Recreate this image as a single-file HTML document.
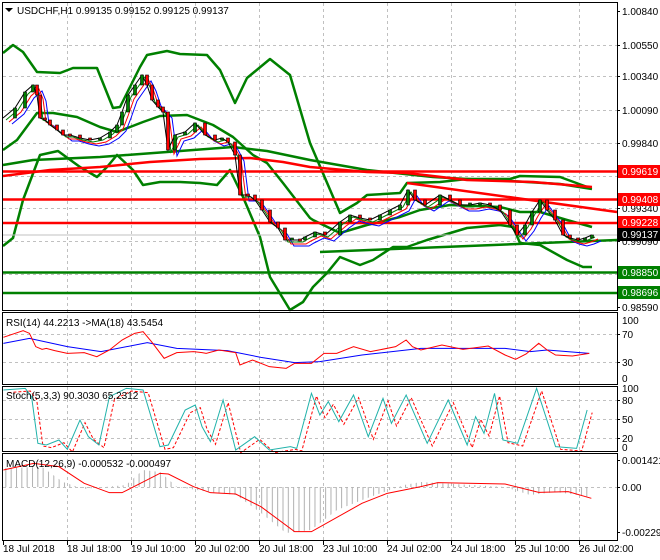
<!DOCTYPE html>
<html><head><meta charset="utf-8"><style>
html,body{margin:0;padding:0;background:#fff;}
svg{display:block;font-family:"Liberation Sans",Tahoma,sans-serif;font-size:10px;}
</style></head><body>
<svg width="660" height="560" viewBox="0 0 660 560" xmlns="http://www.w3.org/2000/svg">
<defs>
<pattern id="hp" patternUnits="userSpaceOnUse" width="5.33" height="10"><rect x="0" y="0" width="1" height="10" fill="#b0b0b0"/></pattern>
<polyline id="cl" fill="none" points="3,118 15,108 25,92 33,85 37,95 40,118 45,120 50,125 57,130 63,135 70,135 80,138 90,140 100,138 110,132 117,125 122,112 128,95 135,85 142,75 147,85 152,100 158,107 163,112 168,150 175,135 185,132 195,123 205,135 215,140 222,138 228,142 235,155 240,195 248,195 255,200 262,210 270,222 278,228 285,240 292,240 300,240 305,237 315,232 325,235 340,222 350,215 360,218 370,220 380,215 390,210 400,205 408,190 415,200 425,205 440,195 450,200 460,205 470,205 480,203 490,205 500,210 510,225 517,235 525,225 532,212 540,200 547,210 555,220 563,235 570,238 578,240 585,238 592,235"/>
<polyline id="st" fill="none" vector-effect="non-scaling-stroke" points="8,270 60,265 75,290 90,430 110,435 140,420 160,448 190,360 210,410 235,435 260,290 300,265 340,270 380,440 400,435 440,330 464,315 480,380 500,425 530,300 560,450 605,410 640,450 690,440 705,445 740,280 760,345 780,305 805,365 840,285 875,410 910,295 930,370 965,285 1015,430 1065,300 1110,435 1130,350 1150,400 1175,280 1195,420 1230,430 1275,265 1320,440 1370,445 1395,330"/>
</defs>
<rect width="660" height="560" fill="#fff"/>
<g stroke="#c0c0c0" stroke-dasharray="3,3" stroke-width="1">
<path d="M67.5,3V541M131.5,3V541M195.5,3V541M259.5,3V541M323.5,3V541M387.5,3V541M451.5,3V541M515.5,3V541M579.5,3V541"/>
<path d="M3,45.5H617M3,76.5H617M3,110.5H617M3,143.5H617M3,176.5H617M3,208.5H617M3,241.5H617M3,274.5H617M3,334.5H617M3,362.5H617M3,400.5H617M3,419.5H617M3,438.5H617M3,487.5H617"/>
</g>
<g fill="none" stroke-linejoin="round">
<polyline stroke="#008000" stroke-width="2.5" points="3,53 13,45 23,52 37,72 60,73 73,68 97,68 113,108 120,107 140,67 147,55 167,51 180,54 207,55 220,70 235,103 247,78 270,59 290,75 310,143 340,213 357,203 367,195 400,193 407,183 440,182 467,179 510,179 520,176 560,177 590,188"/>
<polyline stroke="#008000" stroke-width="2.5" points="3,246 13,238 23,200 40,155 58,151 80,167 97,177 107,167 117,155 133,170 143,185 160,182 180,182 200,183 217,185 230,170 243,197 260,237 270,277 290,310 303,302 313,287 327,273 340,257 360,265 373,260 393,247 407,247 427,240 467,228 500,225 513,227 520,243 540,245 567,260 583,267 592,267"/>
<polyline stroke="#008000" stroke-width="2.5" points="3,150 17,140 37,113 53,113 77,117 100,127 117,132 143,122 160,116 187,115 213,125 233,137 253,155 267,163 283,183 310,218 313,220 340,233 367,225 400,217 420,210 450,205 500,207 520,212 540,212 567,220 592,227"/>
<polyline stroke="#008000" stroke-width="2.5" points="3,165 33,160 100,157 167,152 233,147 267,151 310,160 367,170 433,177 467,179 510,181 560,184 592,189"/>
<polyline stroke="#ff0000" stroke-width="2.5" points="3,176 50,170 100,167 150,162 200,159 250,158 283,162 310,167 367,172 407,173 467,180 533,182 592,187"/>
<line x1="407" y1="183" x2="617" y2="212" stroke="#ff0000" stroke-width="2.5"/>
<line x1="320" y1="252" x2="617" y2="240" stroke="#008000" stroke-width="2.5"/>
<line x1="2" y1="171.5" x2="617" y2="171.5" stroke="#ff0000" stroke-width="2.5"/>
<line x1="2" y1="199.5" x2="617" y2="199.5" stroke="#ff0000" stroke-width="2.5"/>
<line x1="2" y1="223" x2="617" y2="223" stroke="#ff0000" stroke-width="2.5"/>
<line x1="2" y1="235" x2="617" y2="235" stroke="#c0c0c0" stroke-width="1"/>
<line x1="2" y1="272.5" x2="617" y2="272.5" stroke="#008000" stroke-width="2.5"/>
<line x1="2" y1="293" x2="617" y2="293" stroke="#008000" stroke-width="2.5"/>
</g>
<!-- thin MAs -->
<use href="#cl" stroke="#0000ff" stroke-width="1" transform="translate(9,6)"/>
<use href="#cl" stroke="#ff0000" stroke-width="1" transform="translate(6,4)"/>
<use href="#cl" stroke="#008000" stroke-width="1" transform="translate(3,2)"/>
<!-- wicks -->
<use href="#cl" stroke="#000" stroke-width="1"/>
<g stroke="#000" stroke-width="0.6">
<g fill="#008000">
<rect x="13.5" y="108" width="3" height="10"/><rect x="23.5" y="92" width="3" height="16"/><rect x="31.5" y="85" width="3" height="7"/>
<rect x="98.5" y="138" width="3" height="2"/><rect x="108.5" y="132" width="3" height="6"/><rect x="115.5" y="125" width="3" height="7"/><rect x="120.5" y="112" width="3" height="13"/><rect x="126.5" y="95" width="3" height="17"/><rect x="133.5" y="85" width="3" height="10"/><rect x="140.5" y="75" width="3" height="10"/>
<rect x="173.5" y="135" width="3" height="15"/><rect x="183.5" y="132" width="3" height="3"/><rect x="193.5" y="123" width="3" height="9"/><rect x="220.5" y="138" width="3" height="2"/>
<rect x="290.5" y="238" width="3" height="2"/><rect x="303.5" y="237" width="3" height="3"/><rect x="313.5" y="232" width="3" height="5"/><rect x="338.5" y="222" width="3" height="13"/><rect x="348.5" y="215" width="3" height="7"/>
<rect x="378.5" y="215" width="3" height="5"/><rect x="388.5" y="210" width="3" height="5"/><rect x="398.5" y="205" width="3" height="5"/><rect x="406.5" y="190" width="3" height="15"/><rect x="438.5" y="195" width="3" height="10"/>
<rect x="468.5" y="203" width="3" height="2"/><rect x="478.5" y="203" width="3" height="2"/><rect x="523.5" y="225" width="3" height="10"/><rect x="530.5" y="212" width="3" height="13"/><rect x="538.5" y="200" width="3" height="12"/>
<rect x="583.5" y="238" width="3" height="2"/><rect x="590.5" y="235" width="3" height="3"/>
</g>
<g fill="#ff0000">
<rect x="35.5" y="85" width="3" height="10"/><rect x="38.5" y="95" width="3" height="23"/><rect x="43.5" y="118" width="3" height="2"/><rect x="48.5" y="120" width="3" height="5"/><rect x="55.5" y="125" width="3" height="5"/><rect x="61.5" y="130" width="3" height="5"/><rect x="68.5" y="134" width="3" height="2"/><rect x="78.5" y="135" width="3" height="3"/><rect x="88.5" y="138" width="3" height="2"/>
<rect x="145.5" y="75" width="3" height="10"/><rect x="150.5" y="85" width="3" height="15"/><rect x="156.5" y="100" width="3" height="7"/><rect x="161.5" y="107" width="3" height="5"/><rect x="166.5" y="112" width="3" height="38"/>
<rect x="203.5" y="123" width="3" height="12"/><rect x="213.5" y="135" width="3" height="5"/><rect x="226.5" y="138" width="3" height="4"/><rect x="233.5" y="142" width="3" height="13"/><rect x="238.5" y="155" width="3" height="40"/><rect x="246.5" y="194" width="3" height="2"/><rect x="253.5" y="195" width="3" height="5"/><rect x="260.5" y="200" width="3" height="10"/><rect x="268.5" y="210" width="3" height="12"/><rect x="276.5" y="222" width="3" height="6"/><rect x="283.5" y="228" width="3" height="12"/><rect x="298.5" y="239" width="3" height="2"/>
<rect x="323.5" y="232" width="3" height="3"/><rect x="358.5" y="215" width="3" height="3"/><rect x="368.5" y="218" width="3" height="2"/><rect x="413.5" y="190" width="3" height="10"/><rect x="423.5" y="200" width="3" height="5"/><rect x="448.5" y="195" width="3" height="5"/><rect x="458.5" y="200" width="3" height="5"/><rect x="488.5" y="203" width="3" height="2"/><rect x="498.5" y="205" width="3" height="5"/><rect x="508.5" y="210" width="3" height="15"/><rect x="515.5" y="225" width="3" height="10"/>
<rect x="545.5" y="200" width="3" height="10"/><rect x="553.5" y="210" width="3" height="10"/><rect x="561.5" y="220" width="3" height="15"/><rect x="568.5" y="235" width="3" height="3"/><rect x="576.5" y="238" width="3" height="2"/>
</g>
</g>
<!-- indicators in zoom coords -->
<g transform="translate(0,300) scale(0.42088,0.33333)" fill="none">
<polyline vector-effect="non-scaling-stroke" stroke="#0000ff" points="8,130 70,115 160,140 240,155 350,128 420,145 540,152 620,172 700,188 760,185 860,165 1000,145 1200,145 1260,155 1300,150 1400,160"/>
<polyline vector-effect="non-scaling-stroke" stroke="#ff0000" points="8,112 55,92 70,100 85,140 100,148 110,145 130,152 160,160 200,158 230,170 260,150 290,120 320,100 340,95 360,125 390,175 420,158 460,155 480,158 490,160 520,150 560,158 570,195 600,180 640,200 680,205 700,190 740,190 770,160 800,160 840,140 880,155 900,150 940,140 965,120 980,140 1000,150 1050,135 1100,148 1160,138 1200,165 1225,178 1250,162 1280,130 1300,150 1320,165 1360,168 1400,160"/>
<use href="#st" stroke="#ff0000" stroke-dasharray="3,2" transform="translate(12,8)"/>
<use href="#st" stroke="#20b2aa"/>
</g>
<polygon fill="url(#hp)" points="3,487 3,468 42,467 63,482 84,489 126,485 143,470 160,472 177,487 210,492 236,495 261,513 286,533 311,530 337,510 370,497 404,485 421,482 505,487 530,495 556,492 591,497 591,487"/>
<g transform="translate(0,300) scale(0.42088,0.33333)" fill="none">
<polyline vector-effect="non-scaling-stroke" stroke="#ff0000" points="8,510 80,490 140,500 200,550 260,578 290,578 380,520 400,522 460,560 500,578 560,582 620,620 700,695 740,695 860,610 920,580 1000,560 1040,548 1200,552 1280,577 1350,575 1405,595"/>
</g>
<g fill="none" stroke="#000" stroke-width="1">
<rect x="2.5" y="2.5" width="615" height="308"/>
<rect x="2.5" y="312.5" width="615" height="72"/>
<rect x="2.5" y="386.5" width="615" height="65"/>
<rect x="2.5" y="453.5" width="615" height="87"/>
<path d="M3.5,541V545M67.5,541V545M131.5,541V545M195.5,541V545M259.5,541V545M323.5,541V545M387.5,541V545M451.5,541V545M515.5,541V545M579.5,541V545"/>
<path d="M617,11.5h3M617,45.5h3M617,76.5h3M617,110.5h3M617,143.5h3M617,208.5h3M617,241.5h3M617,307.5h3M617,334.5h3M617,362.5h3M617,400.5h3M617,419.5h3M617,438.5h3M617,460.5h3M617,487.5h3M617,532.5h3"/>
</g>
<polygon points="5,8 13,8 9,12" fill="#000"/>
<text x="17" y="14" fill="#000">USDCHF,H1  0.99135 0.99152 0.99125 0.99137</text>
<text x="6" y="326" fill="#000">RSI(14) 44.2213  -&gt;MA(18) 43.5454</text>
<text x="6" y="399" fill="#000">Stoch(5,3,3) 90.3030 65.2312</text>
<text x="6" y="467" fill="#000">MACD(12,26,9) -0.000532 -0.000497</text>
<g fill="#000">
<text x="622" y="15">1.00840</text><text x="622" y="49">1.00550</text><text x="622" y="80">1.00340</text><text x="622" y="114">1.00090</text><text x="622" y="147">0.99840</text><text x="622" y="212">0.99340</text><text x="622" y="245">0.99090</text><text x="622" y="311">0.98590</text>
<text x="622" y="324">100</text><text x="622" y="338">70</text><text x="622" y="366">30</text><text x="622" y="382">0</text>
<text x="622" y="392">100</text><text x="622" y="404">80</text><text x="622" y="423">50</text><text x="622" y="442">20</text><text x="622" y="451">0</text>
<text x="622" y="464">0.001421</text><text x="622" y="491">0.00</text><text x="622" y="536">-0.002298</text>
<text x="3" y="552">18 Jul 2018</text><text x="67" y="552">18 Jul 18:00</text><text x="131" y="552">19 Jul 10:00</text><text x="195" y="552">20 Jul 02:00</text><text x="259" y="552">20 Jul 18:00</text><text x="323" y="552">23 Jul 10:00</text><text x="387" y="552">24 Jul 02:00</text><text x="451" y="552">24 Jul 18:00</text><text x="515" y="552">25 Jul 10:00</text><text x="579" y="552">26 Jul 02:00</text>
</g>
<g fill="#fff">
<rect x="618" y="165" width="42" height="13" fill="#ff0000"/><text x="622" y="175">0.99619</text>
<rect x="618" y="193" width="42" height="13" fill="#ff0000"/><text x="622" y="203">0.99408</text>
<rect x="618" y="216" width="42" height="13" fill="#ff0000"/><text x="622" y="226">0.99228</text>
<rect x="618" y="228" width="42" height="13" fill="#000"/><text x="622" y="238">0.99137</text>
<rect x="618" y="266" width="42" height="13" fill="#008000"/><text x="622" y="276">0.98850</text>
<rect x="618" y="286" width="42" height="13" fill="#008000"/><text x="622" y="296">0.98696</text>
</g>
</svg>
</body></html>
